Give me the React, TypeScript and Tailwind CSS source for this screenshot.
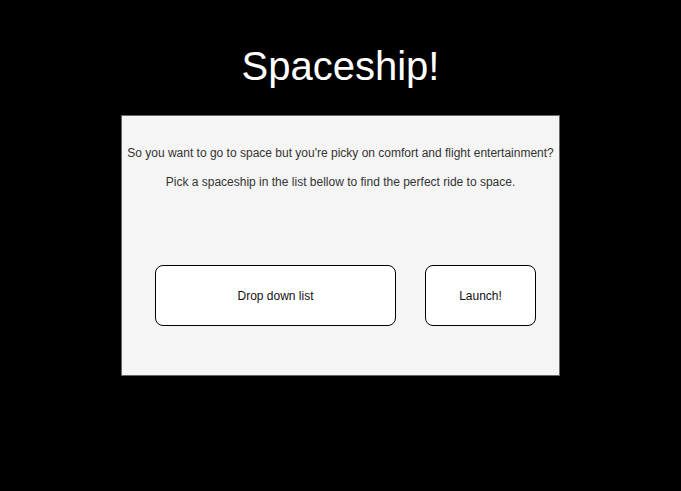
export default function App() {
  return (
    <div
      className="w-full min-h-[491px] bg-black flex flex-col items-center"
      style={{ fontFamily: '"Liberation Sans", Arial, sans-serif' }}
    >
      <h1 className="mt-[43px] text-[40px] leading-[46px] text-white font-normal">
        Spaceship!
      </h1>
      <div className="mt-[26px] w-[439px] h-[261px] bg-[#f5f5f5] border border-[#666666] flex flex-col">
        <p className="mt-[30px] text-[12px] leading-[14px] text-[#333333] text-center">
          So you want to go to space but you're picky on comfort and flight entertainment?
        </p>
        <p className="mt-[15px] text-[12px] leading-[14px] text-[#333333] text-center">
          Pick a spaceship in the list bellow to find the perfect ride to space.
        </p>
        <div className="mt-[76px] pl-[33px] flex gap-[29px]">
          <button className="w-[241px] h-[61px] bg-white border border-black rounded-[8px] text-[12px] text-[#111111]">
            Drop down list
          </button>
          <button className="w-[111px] h-[61px] bg-white border border-black rounded-[8px] text-[12px] text-[#111111]">
            Launch!
          </button>
        </div>
      </div>
    </div>
  );
}
